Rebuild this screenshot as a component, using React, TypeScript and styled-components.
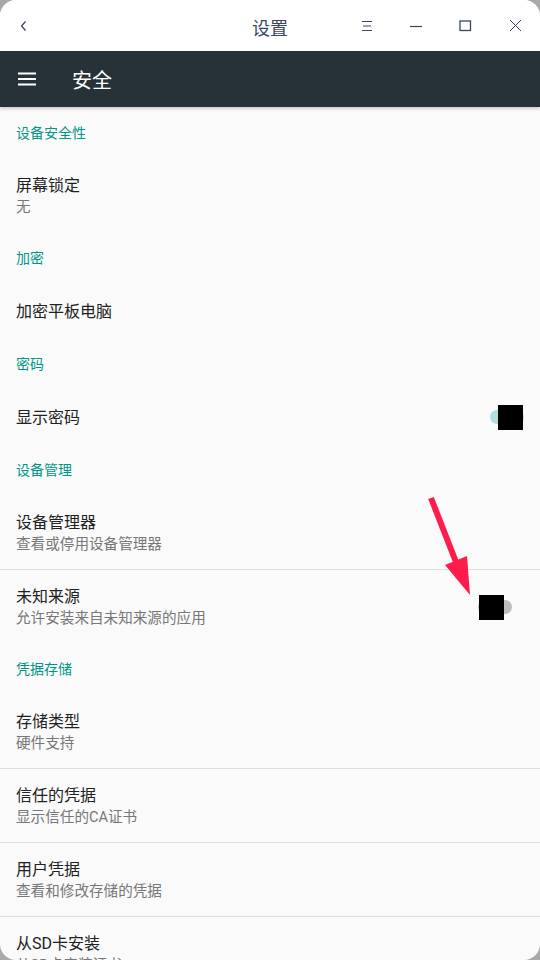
import React from "react";
import styled, { createGlobalStyle } from "styled-components";

const Global = createGlobalStyle`
  html, body { margin: 0; padding: 0; background: #a9a9a9; }
  body { font-family: Roboto, "Noto Sans CJK SC", "Noto Sans", sans-serif; }
  * { box-sizing: border-box; }
`;

const Frame = styled.div`
  position: relative;
  width: 540px;
  height: 960px;
  border-radius: 16px;
  overflow: hidden;
  background: #fafafa;
  display: flex;
  flex-direction: column;
`;

const TitleBar = styled.div`
  height: 51px;
  flex: none;
  background: #ffffff;
  display: grid;
  grid-template-columns: 1fr auto 1fr;
  align-items: center;
  color: #3a4660;
`;

const BackBtn = styled.div`
  justify-self: start;
  padding-left: 19px;
  display: flex;
  align-items: center;
  margin-top: 1px;
`;

const WinTitle = styled.div`
  font-size: 18px;
  color: #3a4660;
  font-family: "Noto Sans CJK SC", sans-serif;
  margin-top: 2px;
`;

const WinControls = styled.div`
  justify-self: end;
  display: flex;
  align-items: center;
  padding-right: 0;
`;

const CtrlBtn = styled.div`
  width: 49.5px;
  height: 30px;
  display: flex;
  align-items: center;
  justify-content: center;
`;

const AppBar = styled.div`
  height: 56px;
  flex: none;
  background: #263238;
  display: flex;
  align-items: center;
  padding-left: 18px;
  box-shadow: 0 2px 3px rgba(0, 0, 0, 0.18);
  position: relative;
  z-index: 1;
`;

const AppTitle = styled.div`
  color: #ffffff;
  font-size: 20px;
  margin-left: 36px;
  font-family: "Noto Sans CJK SC", sans-serif;
  margin-top: 1px;
`;

const List = styled.div`
  flex: 1;
  display: flex;
  flex-direction: column;
`;

const Category = styled.div`
  height: 51px;
  flex: none;
  padding: 16px 16px 0;
  font-size: 14px;
  line-height: 20px;
  color: #009688;
`;

const Item = styled.div<{ $divider?: boolean; $single?: boolean }>`
  flex: none;
  height: ${(p) => (p.$single ? "55px" : "74px")};
  border-top: ${(p) => (p.$divider ? "1px solid #dedede" : "none")};
  display: flex;
  align-items: center;
  padding: 0 0 0 16px;
`;

const Texts = styled.div<{ $single?: boolean }>`
  flex: 1;
  display: flex;
  flex-direction: column;
  padding-top: ${(p) => (p.$single ? "2px" : "1px")};
`;

const ItemTitle = styled.div`
  font-size: 16px;
  line-height: 22px;
  color: #212121;
`;

const ItemSummary = styled.div`
  font-size: 14.6px;
  line-height: 20px;
  color: #777777;
`;

const SwitchWrap = styled.div<{ $right: number }>`
  position: relative;
  width: 34px;
  height: 14px;
  margin-right: ${(p) => p.$right}px;
  flex: none;
`;

const Track = styled.div<{ $on?: boolean }>`
  width: 34px;
  height: 14px;
  border-radius: 7px;
  background: ${(p) => (p.$on ? "#b2dfdb" : "#bdbdbd")};
`;

const Redact = styled.div<{ $on?: boolean }>`
  position: absolute;
  top: -5px;
  left: ${(p) => (p.$on ? "8px" : "1px")};
  width: 25px;
  height: 25px;
  background: #000;
`;

const ArrowLayer = styled.svg`
  position: absolute;
  left: 0;
  top: 0;
  pointer-events: none;
`;

const Switch = ({ on, right }: { on?: boolean; right: number }) => (
  <SwitchWrap $right={right}>
    <Track $on={on} />
    <Redact $on={on} />
  </SwitchWrap>
);

const stroke = "#3a4660";

export default function App() {
  return (
    <>
      <Global />
      <Frame>
        <TitleBar>
          <BackBtn>
            <svg width="10" height="12" viewBox="0 0 10 12">
              <path d="M6.5 1.5 L2.5 6 L6.5 10.5" fill="none" stroke={stroke} strokeWidth="1.3" />
            </svg>
          </BackBtn>
          <WinTitle>设置</WinTitle>
          <WinControls>
            <CtrlBtn>
              <svg width="12" height="12" viewBox="0 0 12 12">
                <path d="M1 1.5 H11 M2 6 H10 M1 10.5 H11" stroke={stroke} strokeWidth="1" />
              </svg>
            </CtrlBtn>
            <CtrlBtn>
              <svg width="14" height="12" viewBox="0 0 14 12">
                <path d="M1 6.5 H13" stroke={stroke} strokeWidth="1.2" />
              </svg>
            </CtrlBtn>
            <CtrlBtn>
              <svg width="13" height="12" viewBox="0 0 13 12">
                <rect x="1" y="1" width="10.5" height="9.5" fill="none" stroke={stroke} strokeWidth="1.3" />
              </svg>
            </CtrlBtn>
            <CtrlBtn>
              <svg width="13" height="13" viewBox="0 0 13 13">
                <path d="M1 1 L12 12 M12 1 L1 12" stroke={stroke} strokeWidth="1" />
              </svg>
            </CtrlBtn>
          </WinControls>
        </TitleBar>
        <AppBar>
          <svg width="18" height="14" viewBox="0 0 18 14">
            <path d="M0 1.5 H18 M0 7 H18 M0 12.5 H18" stroke="#fff" strokeWidth="2.2" />
          </svg>
          <AppTitle>安全</AppTitle>
        </AppBar>
        <List>
          <Category>设备安全性</Category>
          <Item>
            <Texts>
              <ItemTitle>屏幕锁定</ItemTitle>
              <ItemSummary>无</ItemSummary>
            </Texts>
          </Item>
          <Category>加密</Category>
          <Item $single>
            <Texts $single>
              <ItemTitle>加密平板电脑</ItemTitle>
            </Texts>
          </Item>
          <Category>密码</Category>
          <Item $single>
            <Texts $single>
              <ItemTitle>显示密码</ItemTitle>
            </Texts>
            <Switch on right={16} />
          </Item>
          <Category>设备管理</Category>
          <Item>
            <Texts>
              <ItemTitle>设备管理器</ItemTitle>
              <ItemSummary>查看或停用设备管理器</ItemSummary>
            </Texts>
          </Item>
          <Item $divider>
            <Texts>
              <ItemTitle>未知来源</ItemTitle>
              <ItemSummary>允许安装来自未知来源的应用</ItemSummary>
            </Texts>
            <Switch right={28} />
          </Item>
          <Category>凭据存储</Category>
          <Item>
            <Texts>
              <ItemTitle>存储类型</ItemTitle>
              <ItemSummary>硬件支持</ItemSummary>
            </Texts>
          </Item>
          <Item $divider>
            <Texts>
              <ItemTitle>信任的凭据</ItemTitle>
              <ItemSummary>显示信任的CA证书</ItemSummary>
            </Texts>
          </Item>
          <Item $divider>
            <Texts>
              <ItemTitle>用户凭据</ItemTitle>
              <ItemSummary>查看和修改存储的凭据</ItemSummary>
            </Texts>
          </Item>
          <Item $divider>
            <Texts>
              <ItemTitle>从SD卡安装</ItemTitle>
              <ItemSummary>从SD卡安装证书</ItemSummary>
            </Texts>
          </Item>
        </List>
        <ArrowLayer width="540" height="960" viewBox="0 0 540 960">
          <path d="M431 498 L456 562" stroke="#fd1d4d" strokeWidth="6" strokeLinecap="butt" />
          <polygon points="445,565 467,556 470,595" fill="#fd1d4d" />
        </ArrowLayer>
      </Frame>
    </>
  );
}
